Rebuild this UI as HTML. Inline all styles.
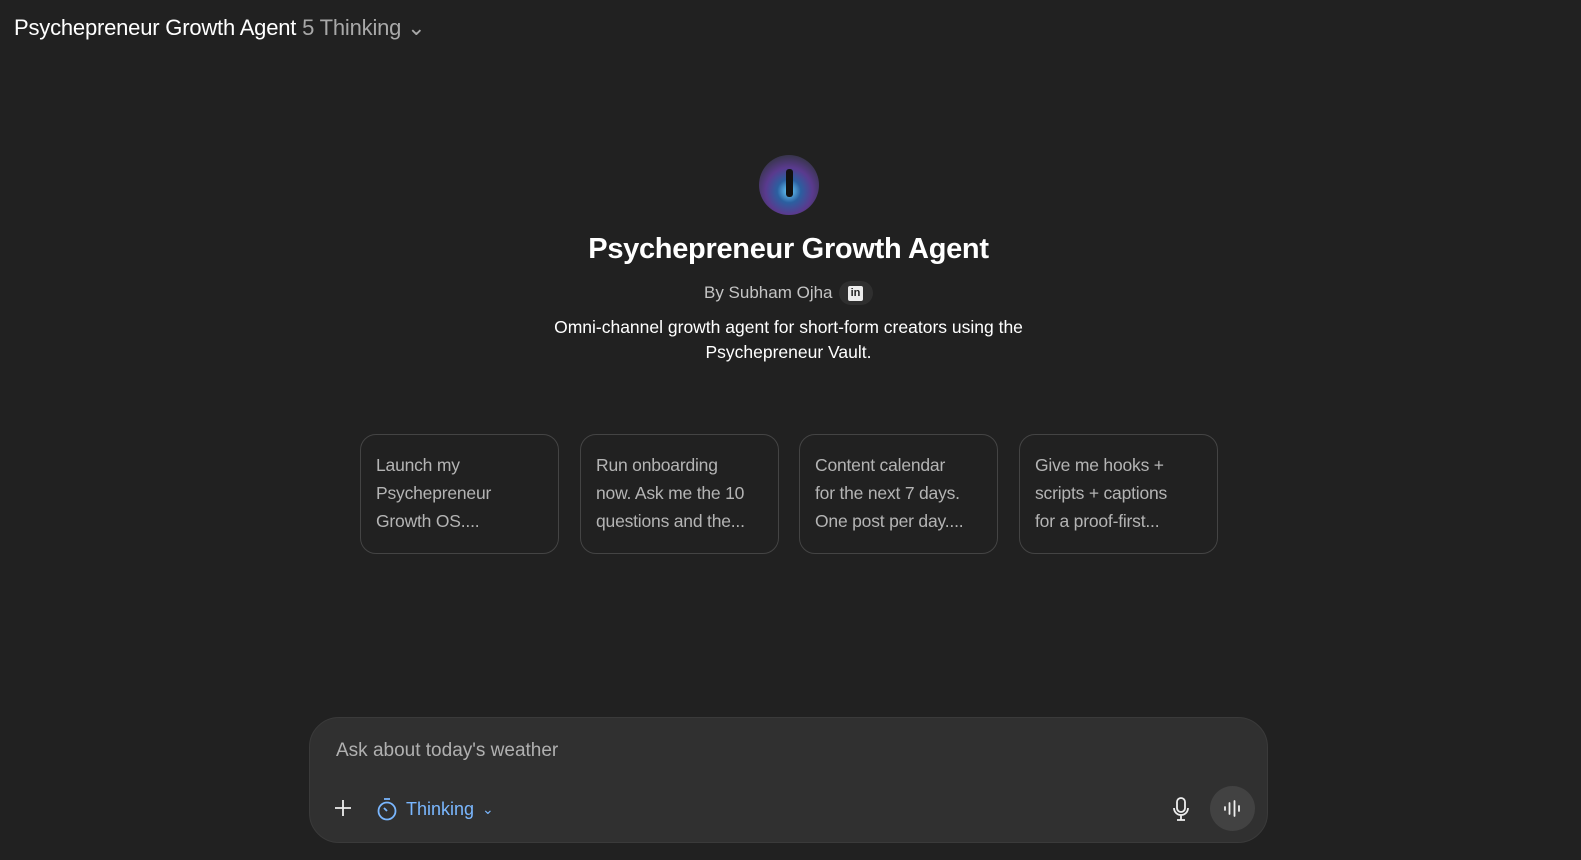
<!DOCTYPE html>
<html><head><meta charset="utf-8"><style>
*{box-sizing:border-box;margin:0;padding:0}
body{width:1581px;height:860px;background:#212121;font-family:"Liberation Sans",sans-serif;color:#fff;position:relative;overflow:hidden}
.top{position:absolute;left:14px;top:15px;font-size:22px;letter-spacing:-0.2px}
.top span{color:#a8a8a8}
.av{position:absolute;left:759px;top:155px;width:60px;height:60px;border-radius:50%;background:radial-gradient(circle at 50% 60%,#6ad0ff 0,#2b5fa0 25%,#5a3a8e 50%,#3a3550 75%,#2a2a3a 100%)}
.av:after{content:"";position:absolute;left:27px;top:14px;width:7px;height:28px;background:#111;border-radius:3px}
h1{position:absolute;left:0;width:1577px;top:233px;text-align:center;font-size:29px;font-weight:bold;letter-spacing:-0.3px}
.by{position:absolute;left:704px;top:281px;font-size:17px;color:#c4c4c4;display:flex;align-items:center;gap:6px}
.li{width:34px;height:24px;border-radius:12px;background:#2f2f2f;display:flex;align-items:center;justify-content:center}
.li b{width:15px;height:15px;background:#ececec;color:#222;font-size:11px;line-height:15px;text-align:center;border-radius:2px}
.desc{position:absolute;left:0;width:1577px;top:315px;text-align:center;font-size:17.5px;line-height:25px}
.card{position:absolute;top:434px;width:199px;height:120px;border:1px solid #444;border-radius:16px;padding:16px 8px 16px 15px;font-size:17.5px;line-height:28px;color:#b4b4b4;white-space:nowrap;letter-spacing:-0.2px}
.comp{position:absolute;left:309px;top:717px;width:959px;height:126px;background:#303030;border-radius:30px;border:1px solid #3a3a3a}
.ph{position:absolute;left:26px;top:22px;font-size:19px;color:#b0b0b0}
.think{position:absolute;left:66px;top:79px;color:#7ab7ff;font-size:18px;display:flex;align-items:center;gap:8px}
.voice{position:absolute;right:12px;top:68px;width:45px;height:45px;border-radius:50%;background:#424242}
</style></head><body>
<div class="top">Psychepreneur Growth Agent <span>5 Thinking ⌄</span></div>
<div class="av"></div>
<h1>Psychepreneur Growth Agent</h1>
<div class="by">By Subham Ojha <div class="li"><b>in</b></div></div>
<div class="desc">Omni-channel growth agent for short-form creators using the<br>Psychepreneur Vault.</div>
<div class="card" style="left:360px">Launch my<br>Psychepreneur<br>Growth OS....</div>
<div class="card" style="left:580px">Run onboarding<br>now. Ask me the 10<br>questions and the...</div>
<div class="card" style="left:799px">Content calendar<br>for the next 7 days.<br>One post per day....</div>
<div class="card" style="left:1019px">Give me hooks +<br>scripts + captions<br>for a proof-first...</div>
<div class="comp">
<div class="ph">Ask about today's weather</div>
<svg style="position:absolute;left:23px;top:80px" width="20" height="20" viewBox="0 0 20 20" stroke="#eee" stroke-width="1.8"><path d="M10 2v16M2 10h16"/></svg>
<div class="think"><svg width="22" height="24" viewBox="0 0 22 24" fill="none" stroke="#7ab7ff" stroke-width="1.8"><circle cx="11" cy="14" r="8.5"/><path d="M8 2h6M11 14l-3-3"/></svg>Thinking <span style="font-size:14px">⌄</span></div>
<svg style="position:absolute;left:862px;top:78px" width="18" height="26" viewBox="0 0 18 26" fill="none" stroke="#eee" stroke-width="1.8"><rect x="5" y="2" width="8" height="14" rx="4"/><path d="M2 12a7 7 0 0 0 14 0M9 19v5M5 24h8"/></svg>
<div class="voice"><svg style="position:absolute;left:12px;top:12px" width="21" height="21" viewBox="0 0 21 21" stroke="#eee" stroke-width="1.8" stroke-linecap="round"><path d="M3 9v3M7.5 5v11M12.5 3v15M17 8v5"/></svg></div>
</div>
</body></html>
